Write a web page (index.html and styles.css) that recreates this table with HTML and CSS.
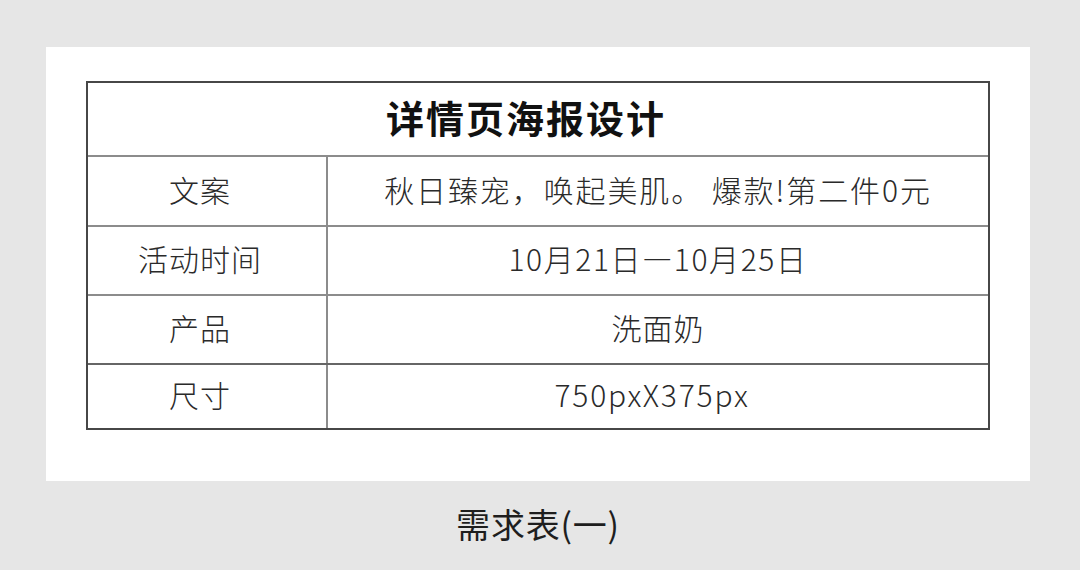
FILE: index.html
```html
<!DOCTYPE html>
<html lang="zh-CN">
<head>
<meta charset="utf-8">
<link rel="stylesheet" href="styles.css">
</head>
<body>
<div class="page">
  <div class="card">
    <div class="sheet">
      <div class="title">详情页海报设计</div>
      <div class="row r1">
        <div class="label">文案</div>
        <div class="value wide">秋日臻宠，唤起美肌。 爆款!第二件0元</div>
      </div>
      <div class="row r2">
        <div class="label">活动时间</div>
        <div class="value date">10月21日—10月25日</div>
      </div>
      <div class="row r3">
        <div class="label">产品</div>
        <div class="value">洗面奶</div>
      </div>
      <div class="row r4">
        <div class="label">尺寸</div>
        <div class="value size">750pxX375px</div>
      </div>
    </div>
  </div>
  <div class="caption">需求表(一)</div>
</div>
</body>
</html>
```

FILE: styles.css
```css
html, body {
  margin: 0;
  padding: 0;
  background: #e6e6e6;
}
body {
  width: 1080px;
  height: 570px;
  overflow: hidden;
  font-family: "Noto Sans CJK SC", "Noto Sans", sans-serif;
}
.page {
  padding: 47px 0 0 46px;
}
.card {
  width: 984px;
  height: 434px;
  background: #ffffff;
  box-sizing: border-box;
  padding: 34px 40px 0 40px;
}
.sheet {
  width: 904px;
  height: 349px;
  box-sizing: border-box;
  border: 2px solid #474747;
  display: flex;
  flex-direction: column;
}
.title {
  height: 74px;
  flex: none;
  box-sizing: border-box;
  padding: 0 24px 5px 0;
  border-bottom: 2px solid #8c8c8c;
  display: flex;
  align-items: center;
  justify-content: center;
  font-size: 38px;
  font-weight: 700;
  color: #111;
  letter-spacing: 2px;
}
.row {
  display: flex;
  flex: none;
  border-bottom: 2px solid #8c8c8c;
}
.r1 { height: 68px; }
.r2 { height: 67px; }
.r3 { height: 67px; border-bottom-color: #666; }
.r4 { height: 63px; border-bottom: none; }
.label {
  width: 240px;
  flex: none;
  box-sizing: border-box;
  padding: 0 14px 5px 0;
  border-right: 2px solid #8c8c8c;
  display: flex;
  align-items: center;
  justify-content: center;
  font-size: 30px;
  font-weight: 300;
  color: #2a2a2a;
  letter-spacing: 1px;
}
.value {
  flex: 1;
  box-sizing: border-box;
  padding: 0 0 5px 0;
  display: flex;
  align-items: center;
  justify-content: center;
  font-size: 30px;
  font-weight: 300;
  color: #2a2a2a;
  letter-spacing: 1px;
}
.value.wide {
  letter-spacing: 1.9px;
}
.value.date {
  letter-spacing: 1.6px;
}
.value.size {
  letter-spacing: 1.8px;
  padding-right: 12px;
}
.caption {
  width: 984px;
  text-align: center;
  margin-top: 18px;
  font-size: 34px;
  color: #1e1e1e;
  letter-spacing: 0.8px;
}
```
